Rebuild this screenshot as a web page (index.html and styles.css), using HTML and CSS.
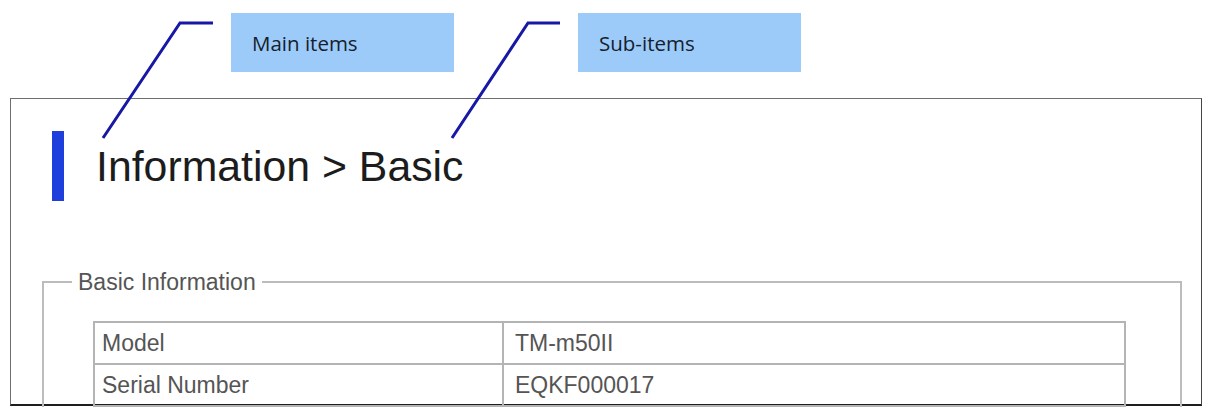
FILE: index.html
```html
<!DOCTYPE html>
<html lang="en">
<head>
<meta charset="utf-8">
<title>Information &gt; Basic</title>
<link rel="stylesheet" href="styles.css">
</head>
<body>
<div class="callouts">
  <div class="callout">Main items</div>
  <div class="callout">Sub-items</div>
</div>
<div class="frame">
  <div class="heading-row">
    <span class="bar"></span>
    <h1 class="heading">Information &gt; Basic</h1>
  </div>
  <fieldset class="group">
    <legend class="group-title">Basic Information</legend>
    <table class="info">
      <tr><td class="key">Model</td><td class="val">TM-m50II</td></tr>
      <tr><td class="key">Serial Number</td><td class="val">EQKF000017</td></tr>
    </table>
  </fieldset>
</div>
<svg class="leaders" width="1207" height="407" viewBox="0 0 1207 407">
  <polyline points="213,23 180,23 103,138" fill="none" stroke="#1818a6" stroke-width="3"/>
  <polyline points="560,23 528,23 452,138" fill="none" stroke="#1818a6" stroke-width="3"/>
</svg>
</body>
</html>
```
FILE: styles.css
```css
html, body {
  margin: 0;
  padding: 0;
  background: #ffffff;
  overflow: hidden;
}
body {
  width: 1207px;
  height: 407px;
  position: relative;
  font-family: "Liberation Sans", Arial, sans-serif;
}
.callouts {
  height: 98px;
  box-sizing: border-box;
  padding: 13px 0 0 231px;
  display: flex;
  gap: 124px;
}
.callout {
  width: 223px;
  height: 59px;
  box-sizing: border-box;
  background: #9ccbfa;
  padding-left: 21px;
  display: flex;
  align-items: center;
  font-family: "Open Sans", "Noto Sans", sans-serif;
  font-size: 20.5px;
  color: #16202c;
}
.frame {
  margin-left: 10px;
  width: 1192px;
  height: 308px;
  box-sizing: border-box;
  border: 1px solid #6e6e6e;
  border-right-color: #444;
  border-bottom: 2px solid #1e1e1e;
  padding-top: 32px;
}
.heading-row {
  display: flex;
  align-items: center;
  height: 70px;
  margin-left: 41px;
}
.bar {
  width: 12px;
  height: 70px;
  background: #1f3fdc;
  flex: none;
}
.heading {
  margin: 0 0 0 32px;
  font-weight: normal;
  font-size: 42.8px;
  line-height: 1;
  color: #1c1c1c;
}
.group {
  margin: 68px 19px 0 31px;
  padding: 0;
  border: 2px solid #bcbcbc;
  min-width: 0;
}
.group-title {
  margin-left: 28px;
  padding: 0 6px;
  font-size: 23px;
  line-height: 26px;
  color: #555555;
}
.info {
  margin: 26px 0 0 49px;
  width: 1033px;
  border-collapse: collapse;
  font-size: 23px;
  color: #555555;
}
.info td {
  border: 2px solid #b4b4b4;
  height: 40px;
  padding: 0;
  vertical-align: middle;
}
.key {
  width: 400px;
  padding-left: 7px !important;
}
.val {
  padding-left: 11px !important;
}
.leaders {
  position: absolute;
  left: 0;
  top: 0;
  pointer-events: none;
}
```
